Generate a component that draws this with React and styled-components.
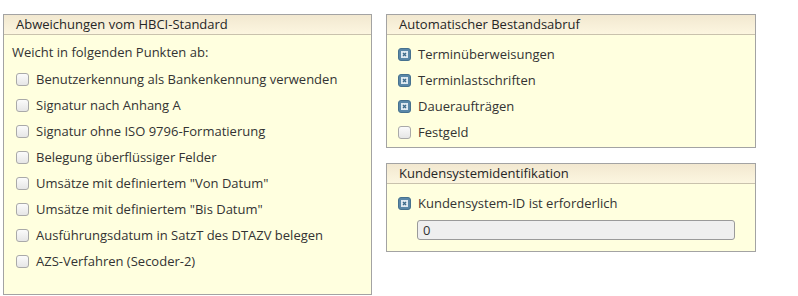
import React from "react";
import styled, { createGlobalStyle } from "styled-components";

const GlobalStyle = createGlobalStyle`
  body {
    margin: 0;
    background: #ffffff;
    font-family: "Open Sans", "DejaVu Sans", sans-serif;
    font-size: 13px;
    color: #333333;
  }
`;

const Page = styled.div`
  display: flex;
  align-items: flex-start;
  gap: 14px;
  padding: 14px 0 0 3px;
  width: 798px;
  height: 296px;
  box-sizing: border-box;
`;

const Column = styled.div`
  display: flex;
  flex-direction: column;
  gap: 15px;
`;

const Panel = styled.fieldset`
  margin: 0;
  padding: 0;
  width: ${(p) => p.$width}px;
  border: 1px solid #a3a3a3;
  background: #ffffdf;
  box-sizing: border-box;
`;

const Legend = styled.div`
  height: 19px;
  line-height: 19px;
  padding-left: 12px;
  border-bottom: 1px solid #c9c2ad;
  background: linear-gradient(#f2e8d0, #fcf6e0);
  color: #262626;
`;

const Body = styled.div`
  padding: ${(p) => p.$pad};
`;

const Intro = styled.div`
  height: 27px;
  line-height: 26px;
`;

const Row = styled.label`
  display: flex;
  align-items: center;
  gap: 7px;
  height: 26px;
  padding-left: ${(p) => p.$indent || 0}px;
`;

const Box = styled.span`
  width: 13px;
  height: 13px;
  box-sizing: border-box;
  border-radius: 3px;
  flex: none;
  display: flex;
  align-items: center;
  justify-content: center;
  border: 1px solid ${(p) => (p.$checked ? "#46718f" : "#a9a9a9")};
  background: ${(p) =>
    p.$checked ? "#5a87a8" : "linear-gradient(#fbfbfb, #e6e6e6)"};
`;

const Input = styled.div`
  margin: 4px 0 0 30px;
  width: 318px;
  height: 20px;
  box-sizing: border-box;
  border: 1px solid #9a9a9a;
  border-radius: 3px;
  background: #efefef;
  padding-left: 5px;
  line-height: 18px;
  color: #333;
`;

function Check({ checked, label, indent }) {
  return (
    <Row $indent={indent}>
      <Box $checked={checked}>
        {checked && (
          <svg width="7" height="7" viewBox="0 0 7 7">
            <rect x="0" y="0" width="7" height="7" fill="#dfe9f1" />
            <path d="M2 2 L5 5 M5 2 L2 5" stroke="#3d6a8a" strokeWidth="1.4" />
          </svg>
        )}
      </Box>
      <span>{label}</span>
    </Row>
  );
}

const deviations = [
  "Benutzerkennung als Bankenkennung verwenden",
  "Signatur nach Anhang A",
  "Signatur ohne ISO 9796-Formatierung",
  "Belegung überflüssiger Felder",
  'Umsätze mit definiertem "Von Datum"',
  'Umsätze mit definiertem "Bis Datum"',
  "Ausführungsdatum in SatzT des DTAZV belegen",
  "AZS-Verfahren (Secoder-2)",
];

const autoFetch = [
  ["Terminüberweisungen", true],
  ["Terminlastschriften", true],
  ["Daueraufträgen", true],
  ["Festgeld", false],
];

export default function App() {
  return (
    <>
      <GlobalStyle />
      <Page>
        <Panel $width={369}>
          <Legend>Abweichungen vom HBCI-Standard</Legend>
          <Body $pad="4px 8px 20px 8px">
            <Intro>Weicht in folgenden Punkten ab:</Intro>
            {deviations.map((d) => (
              <Check key={d} label={d} indent={4} />
            ))}
          </Body>
        </Panel>
        <Column>
          <Panel $width={370}>
            <Legend>Automatischer Bestandsabruf</Legend>
            <Body $pad="6px 11px 2px 11px">
              {autoFetch.map(([l, c]) => (
                <Check key={l} label={l} checked={c} />
              ))}
            </Body>
          </Panel>
          <Panel $width={370}>
            <Legend>Kundensystemidentifikation</Legend>
            <Body $pad="6px 11px 11px 0">
              <Check label="Kundensystem-ID ist erforderlich" checked indent={11} />
              <Input>0</Input>
            </Body>
          </Panel>
        </Column>
      </Page>
    </>
  );
}
